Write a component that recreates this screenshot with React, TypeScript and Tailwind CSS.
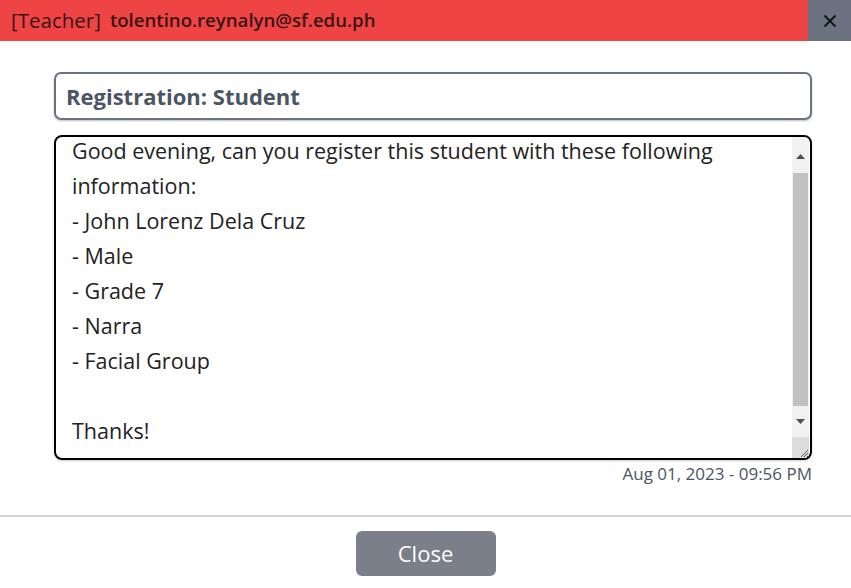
import React from "react";

const lines = [
  "Good evening, can you register this student with these following",
  "information:",
  "- John Lorenz Dela Cruz",
  "- Male",
  "- Grade 7",
  "- Narra",
  "- Facial Group",
  "\u00a0",
  "Thanks!",
];

export default function App() {
  return (
    <div
      className="w-[851px] h-[588px] bg-white flex flex-col overflow-hidden"
      style={{ fontFamily: '"Open Sans", "Noto Sans", sans-serif' }}
    >
      <div className="h-[41px] bg-[#ef4444] flex items-stretch">
        <div className="flex-1 flex items-center pl-[11px] gap-[9px] text-[#3a1414]">
          <span className="text-[20.5px] leading-none">[Teacher]</span>
          <span className="text-[18.6px] font-semibold leading-none">tolentino.reynalyn@sf.edu.ph</span>
        </div>
        <div className="w-[43px] bg-[#6b7280] flex items-center justify-center">
          <svg width="14" height="14" viewBox="0 0 14 14">
            <path d="M1.5 1.5 L12.5 12.5 M12.5 1.5 L1.5 12.5" stroke="#111" strokeWidth="1.8" />
          </svg>
        </div>
      </div>

      <div className="flex-1 flex flex-col pl-[54px] pr-[39px] pt-[31px]">
        <div className="h-[48px] border-2 border-[#6b7280] rounded-[7px] shadow-[0_1px_2px_rgba(0,0,0,0.25)] flex items-center pl-[10px]">
          <span className="text-[22px] font-bold text-[#4b5563]">Registration: Student</span>
        </div>

        <div className="mt-[15px] h-[325px] border-2 border-black rounded-[8px] shadow-[0_1px_2px_rgba(0,0,0,0.2)] flex overflow-hidden">
          <div className="flex-1 overflow-hidden pl-[16px]">
            <div className="-mt-[4px]">
              {lines.map((l, i) => (
                <div key={i} className="text-[21.5px] leading-[35px] text-[#222] whitespace-nowrap">
                  {l}
                </div>
              ))}
            </div>
          </div>
          <div className="w-[17px] mr-[1px] flex flex-col bg-[#f1f1f1]">
            <div className="h-[36px] flex items-center justify-center pt-[2px]">
              <svg width="9" height="5" viewBox="0 0 9 5"><path d="M0 5 L4.5 0 L9 5 Z" fill="#505050" /></svg>
            </div>
            <div className="h-[233px] bg-[#c1c1c1] mx-[1px]" />
            <div className="h-[31px] flex items-center justify-center">
              <svg width="9" height="5" viewBox="0 0 9 5"><path d="M0 0 L9 0 L4.5 5 Z" fill="#505050" /></svg>
            </div>
            <div className="flex-1 bg-[#dcdcdc] flex items-end justify-end">
              <svg width="10" height="10" viewBox="0 0 10 10">
                <path d="M2 9 L9 2 M5 9 L9 5 M8 9 L9 8" stroke="#555" strokeWidth="1" />
              </svg>
            </div>
          </div>
        </div>

        <div className="mt-[1px] text-right text-[17px] text-[#4b5563]">Aug 01, 2023 - 09:56 PM</div>
      </div>

      <div className="border-t-2 border-[#d1d5db] h-[73px] flex justify-center pt-[14px]">
        <button className="w-[140px] h-[45px] bg-[#7b7f8a] rounded-[6px] text-white text-[22px]">Close</button>
      </div>
    </div>
  );
}
